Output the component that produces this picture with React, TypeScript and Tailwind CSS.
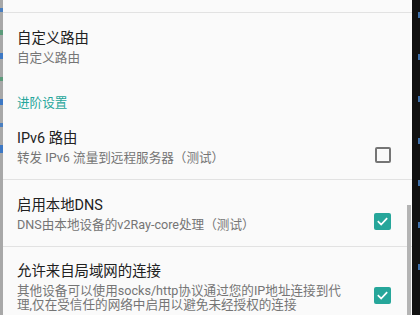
import React from "react";

const font = { fontFamily: 'Roboto, "Noto Sans CJK SC", "Noto Sans", sans-serif' };

function Checkbox({ checked }: { checked: boolean }) {
  if (!checked) {
    return <div className="self-center w-[16px] h-[16px] rounded-[2px] border-2 border-[#757575]" />;
  }
  return (
    <div className="self-center w-[17px] h-[17px] rounded-[2px] bg-[#26a69a] flex items-center justify-center">
      <svg width="13" height="13" viewBox="0 0 24 24" fill="none">
        <path d="M4.5 12.5l5 5L19.5 7" stroke="#fff" strokeWidth="3.2" strokeLinecap="square" />
      </svg>
    </div>
  );
}

function Item({
  title,
  summary,
  checked,
  size,
}: {
  title: string;
  summary?: React.ReactNode;
  checked?: boolean;
  size: string;
}) {
  return (
    <div className={`shrink-0 flex pl-[14px] pr-[21px] ${size}`}>
      <div className="flex-1 min-w-0">
        <div className="text-[14.4px] leading-[18px] text-[#212121]">{title}</div>
        {summary && (
          <div className="mt-[3px] text-[12.6px] leading-[14px] text-[#757575] whitespace-nowrap">
            {summary}
          </div>
        )}
      </div>
      {checked !== undefined && <Checkbox checked={checked} />}
    </div>
  );
}

export default function App() {
  return (
    <div className="w-[420px] h-[315px] overflow-hidden flex bg-[#fafafa]" style={font}>
      {/* left window edge */}
      <div className="w-[3px] h-full bg-[#a8a8a8] flex flex-col gap-[18px] pt-[8px]">
        <div className="h-[4px] bg-[#4a7fc0]" />
        <div className="h-[5px] bg-[#5c9a7a]" />
        <div className="h-[6px] bg-[#3d78c4]" />
        <div className="h-[4px] bg-[#5c9a7a]" />
        <div className="h-[6px] bg-[#3d78c4]" />
        <div className="h-[4px] bg-[#4a7fc0]" />
        <div className="h-[8px] bg-[#3d78c4]" />
      </div>

      {/* preference list */}
      <div className="relative flex-1 flex flex-col">
        <div className="shrink-0 h-[12px] border-b border-[#e2e2e2] box-content" />
        <Item title="自定义路由" summary="自定义路由" size="h-[66px] pt-[17px]" />
        <div className="shrink-0 h-[34px] pl-[14px] pt-[15px]">
          <div className="text-[12.6px] leading-[18px] text-[#26a69a]">进阶设置</div>
        </div>
        <Item
          title="IPv6 路由"
          summary="转发 IPv6 流量到远程服务器（测试）"
          checked={false}
          size="h-[66px] pt-[17px]"
        />
        <div className="shrink-0 h-px bg-[#e2e2e2]" />
        <Item
          title="启用本地DNS"
          summary="DNS由本地设备的v2Ray-core处理（测试）"
          checked
          size="h-[66px] pt-[17px]"
        />
        <div className="shrink-0 h-px bg-[#e2e2e2]" />
        <Item
          title="允许来自局域网的连接"
          summary={
            <>
              其他设备可以使用socks/http协议通过您的IP地址连接到代
              <br />
              理,仅在受信任的网络中启用以避免未经授权的连接
            </>
          }
          checked
          size="h-[81px] pt-[16px]"
        />

        {/* scrollbar */}
        <div className="absolute right-[1px] top-[205px] w-[4px] h-[110px] bg-[#b4b4b4]" />
      </div>

      {/* right dark edge */}
      <div className="w-[8px] h-full bg-[#111111] flex flex-col items-end gap-[36px] pt-[12px]">
        <div className="w-[2px] h-[6px] bg-[#3f6fa8]" />
        <div className="w-[2px] h-[6px] bg-[#3f6fa8]" />
        <div className="w-[2px] h-[6px] bg-[#3f6fa8]" />
        <div className="w-[2px] h-[6px] bg-[#3f6fa8]" />
        <div className="w-[2px] h-[6px] bg-[#3f6fa8]" />
        <div className="w-[2px] h-[6px] bg-[#3f6fa8]" />
        <div className="w-[2px] h-[6px] bg-[#3f6fa8]" />
      </div>
    </div>
  );
}
